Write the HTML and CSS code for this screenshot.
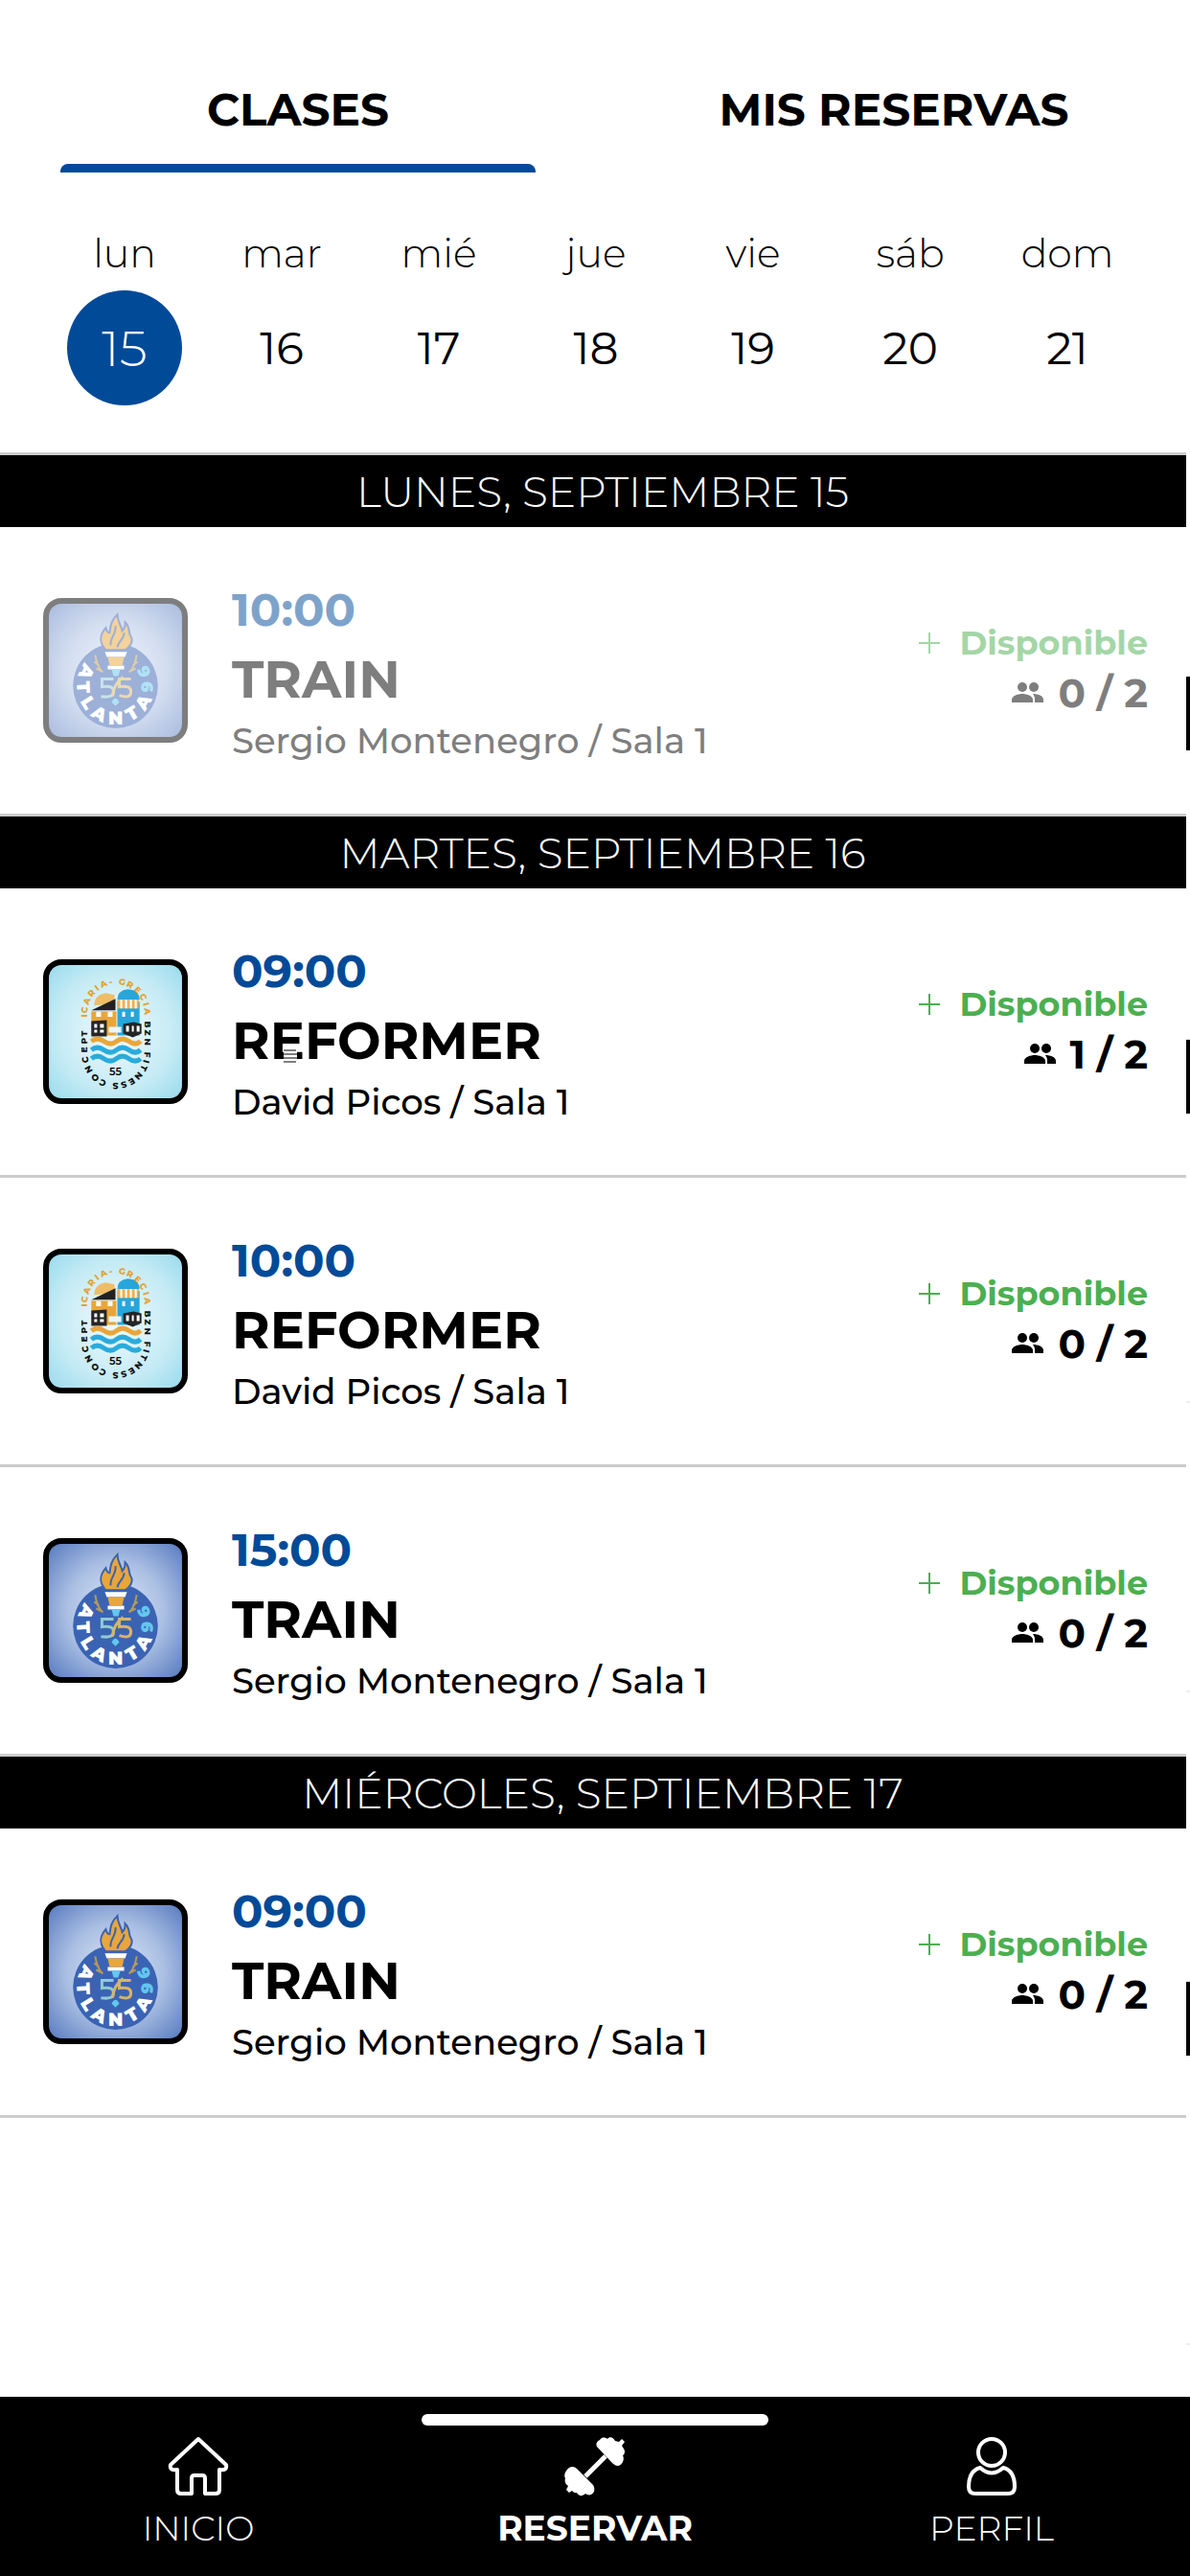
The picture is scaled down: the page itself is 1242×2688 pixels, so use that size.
FILE: index.html
```html
<!DOCTYPE html>
<html lang="es">
<head>
<meta charset="utf-8">
<meta name="viewport" content="width=device-width, initial-scale=1">
<title>Reservar clases</title>
<link rel="stylesheet" href="styles.css">
</head>
<body>
<svg class="defs" aria-hidden="true">
  <defs>
    <radialGradient id="blueGlow" cx="50%" cy="50%" r="70%">
      <stop offset="0" stop-color="#dfe8f7"/><stop offset=".5" stop-color="#aabfe3"/><stop offset="1" stop-color="#5276bd"/>
    </radialGradient>
    <radialGradient id="skyGlow" cx="50%" cy="50%" r="70%">
      <stop offset="0" stop-color="#f2fafc"/><stop offset=".6" stop-color="#c5ebf5"/><stop offset="1" stop-color="#97d9ec"/>
    </radialGradient>
    <path id="atlantaArc" d="M43 67 A40 40 0 1 0 115 91"/>
    <path id="yearArc" d="M95.7 73.6 A27 27 0 0 1 98 105"/>
    <path id="topArc" d="M46 62 V56 A29.5 30 0 0 1 105 56 V66"/>
    <path id="bottomArc" d="M105 63 V97 A29.5 31 0 0 1 46 97 V56"/>
    <symbol id="atlanta" viewBox="0 0 150 150">
      <rect x="3" y="3" width="144" height="144" rx="16" fill="url(#blueGlow)" stroke="#000" stroke-width="6"/>
      <circle cx="75" cy="91" r="44" fill="#3b63b3"/>
      <path d="M65 54c-8-9-6-16 0-23 1 4 2 5 4 5 1-9 2-13 8-19 0 8 4 11 5 17 3-3 3-5 3-9 6 6 3 11 6 15 3 5-1 11-6 14z" fill="#e9a63a" stroke="#3b63b3" stroke-width="2"/>
      <path d="M70 49c-1-8 6-11 5-20M77 51c1-7 7-8 7-15" fill="none" stroke="#3b63b3" stroke-width="2"/>
      <path d="M64 56h23l-2 5H66zM67 70h17v4H67z" fill="#fff"/>
      <path d="M67 61h17l-2 9H69z" fill="#e9a63a"/>
      <path d="M71 74h9l-2 7h-5zM71 108q4-8 8 0l-4 4z" fill="#62c7ee"/>
      <path d="M54 59q2 13 8 18M53 66l5 4M55 73l6 3M97 59q-2 13-8 18M98 66l-5 4M96 73l-6 3" fill="none" stroke="#b89a58" stroke-width="2"/>
      <path d="M73 84H61v8q12-2 12 5 0 7-13 5" fill="none" stroke="#8fcbd0" stroke-width="3"/>
      <path d="M91 84H79v8q12-2 12 5 0 8-12 4M83 82q-10 7-11 20" fill="none" stroke="#d8b468" stroke-width="3"/>
      <text class="seal-name" x="0 21 42 60 81 104 122" fill="#fff"><textPath href="#atlantaArc">ATLANTA</textPath></text>
      <text class="seal-year" x="1 14" fill="#62c7ee"><textPath href="#yearArc">96</textPath></text>
    </symbol>
    <symbol id="icaria" viewBox="0 0 150 150">
      <rect x="3" y="3" width="144" height="144" rx="16" fill="url(#skyGlow)" stroke="#000" stroke-width="6"/>
      <path d="M53 48q0-11 12-13l9 2v9z" fill="#efbd66"/>
      <path d="M50 53l25-12v12z" fill="#222"/>
      <path d="M50 54h26v25H50z" fill="#e9a63a"/>
      <path d="M77 44h23v35H77z" fill="#27a6dc"/>
      <path d="M77 42q0-10 11-11 12 1 12 11z" fill="#27a6dc"/>
      <path d="M77 42h22v9H77z" fill="#edb254"/>
      <path d="M81 42v9M86 42v9M91 42v9M96 42v9" stroke="#fff" stroke-width="2"/>
      <path d="M55 57h5M67 57h5M82 57h3M91 57h3" stroke="#fff" stroke-width="5"/>
      <path d="M50 64l16-1v17H50zM83 67l11-2 8 2v10l-9 4-10-4z" fill="#252525"/>
      <path d="M53 67h3v4h-3zM59 67h4v4h-4zM53 73h3v3h-3zM59 73h4v3h-4zM86 69h3v6h-3zM92 69h2v6h-2zM97 69h3v6h-3z" fill="#fff"/>
      <path d="M68 70h13v6H68z" fill="#e9f6fa"/>
      <g fill="none" stroke-width="5"><path d="M50 85q6-5 13 0t13 0 13 0 12 0" stroke="#e9a63a"/><path d="M50 94q6-5 13 0t13 0 13 0 12 0M50 103q6-5 13 0t13 0 13 0 12 0" stroke="#2aabdc"/></g>
      <text class="ring-name" x="2 6 14 23 32 37 46 55 63 72 80 89 94" fill="#e3a12f"><textPath href="#topArc">ICARIA-GRECIA</textPath></text>
      <text class="ring-name" x="1 10 19 28 33 41 46 54 63 71 79 87 91 99 109 119 129 138 146" fill="#111"><textPath href="#bottomArc">BZN FITNESS CONCEPT</textPath></text>
      <text x="75" y="120" class="ring-mark">55</text>
    </symbol>
    <symbol id="people" viewBox="0 0 34 22">
      <circle cx="11" cy="5" r="5"/><circle cx="23" cy="5" r="5"/>
      <path d="M0 21v-3c0-4 7-6 11-6s11 2 11 6v3zM24 21v-4c0-2-1-3-2-5 5 0 11 2 11 6v3z"/>
    </symbol>
  </defs>
</svg>

<div class="app">
  <header class="top">
    <nav class="tabs" aria-label="Secciones">
      <button class="tab tab-active" type="button">CLASES</button>
      <button class="tab" type="button">MIS RESERVAS</button>
    </nav>
    <div class="week">
      <button class="day day-active" type="button"><span class="day-name">lun</span><span class="day-num">15</span></button>
      <button class="day" type="button"><span class="day-name">mar</span><span class="day-num">16</span></button>
      <button class="day" type="button"><span class="day-name">mié</span><span class="day-num">17</span></button>
      <button class="day" type="button"><span class="day-name">jue</span><span class="day-num">18</span></button>
      <button class="day" type="button"><span class="day-name">vie</span><span class="day-num">19</span></button>
      <button class="day" type="button"><span class="day-name">sáb</span><span class="day-num">20</span></button>
      <button class="day" type="button"><span class="day-name">dom</span><span class="day-num">21</span></button>
    </div>
  </header>

  <main class="pager">
    <div class="schedule">
      <h2 class="date">LUNES, SEPTIEMBRE 15</h2>
      <article class="class-row past">
        <svg class="badge" aria-hidden="true"><use href="#atlanta"/></svg>
        <div class="info"><time class="time">10:00</time><h3 class="name">TRAIN</h3><p class="coach">Sergio Montenegro / Sala 1</p></div>
        <div class="status"><p class="free"><svg class="plus" viewBox="0 0 22 22" aria-hidden="true"><path d="M11 0v22M0 11h22"/></svg>Disponible</p><p class="seats"><svg class="people" aria-hidden="true"><use href="#people"/></svg>0 / 2</p></div>
      </article>
      <h2 class="date">MARTES, SEPTIEMBRE 16</h2>
      <article class="class-row">
        <svg class="badge" aria-hidden="true"><use href="#icaria"/></svg>
        <div class="info"><time class="time">09:00</time><h3 class="name">REFORMER<svg class="glitch" viewBox="0 0 20 16" aria-hidden="true"><path d="M3 0h14v16H3z" fill="#fff"/><path d="M3 2h13M1 6h17v4H1zM3 14h13" fill="none" stroke="#000" stroke-width="1"/></svg></h3><p class="coach">David Picos / Sala 1</p></div>
        <div class="status"><p class="free"><svg class="plus" viewBox="0 0 22 22" aria-hidden="true"><path d="M11 0v22M0 11h22"/></svg>Disponible</p><p class="seats"><svg class="people" aria-hidden="true"><use href="#people"/></svg>1 / 2</p></div>
      </article>
      <article class="class-row">
        <svg class="badge" aria-hidden="true"><use href="#icaria"/></svg>
        <div class="info"><time class="time">10:00</time><h3 class="name">REFORMER</h3><p class="coach">David Picos / Sala 1</p></div>
        <div class="status"><p class="free"><svg class="plus" viewBox="0 0 22 22" aria-hidden="true"><path d="M11 0v22M0 11h22"/></svg>Disponible</p><p class="seats"><svg class="people" aria-hidden="true"><use href="#people"/></svg>0 / 2</p></div>
      </article>
      <article class="class-row">
        <svg class="badge" aria-hidden="true"><use href="#atlanta"/></svg>
        <div class="info"><time class="time">15:00</time><h3 class="name">TRAIN</h3><p class="coach">Sergio Montenegro / Sala 1</p></div>
        <div class="status"><p class="free"><svg class="plus" viewBox="0 0 22 22" aria-hidden="true"><path d="M11 0v22M0 11h22"/></svg>Disponible</p><p class="seats"><svg class="people" aria-hidden="true"><use href="#people"/></svg>0 / 2</p></div>
      </article>
      <h2 class="date">MIÉRCOLES, SEPTIEMBRE 17</h2>
      <article class="class-row">
        <svg class="badge" aria-hidden="true"><use href="#atlanta"/></svg>
        <div class="info"><time class="time">09:00</time><h3 class="name">TRAIN</h3><p class="coach">Sergio Montenegro / Sala 1</p></div>
        <div class="status"><p class="free"><svg class="plus" viewBox="0 0 22 22" aria-hidden="true"><path d="M11 0v22M0 11h22"/></svg>Disponible</p><p class="seats"><svg class="people" aria-hidden="true"><use href="#people"/></svg>0 / 2</p></div>
      </article>
    </div>
    <div class="next-page" aria-hidden="true">
      <div class="peek-date"></div>
      <div class="peek-row"></div>
      <div class="peek-date"></div>
      <div class="peek-row"></div>
      <div class="peek-row"></div>
      <div class="peek-row"></div>
      <div class="peek-date"></div>
      <div class="peek-row"></div>
    </div>
  </main>

  <nav class="bottom-nav" aria-label="Principal">
    <a class="nav-item" href="#inicio">
      <svg class="nav-icon" viewBox="0 0 64 64" aria-hidden="true"><path d="M32 4L3 31c-1 4 1 6 7 5v21q0 4 4 4h11V45q0-3 3-3h8q3 0 3 3v16h11q4 0 4-4V36c6 1 8-1 7-5z"/></svg>
      <span>INICIO</span>
    </a>
    <a class="nav-item nav-active" href="#reservar" aria-current="page">
      <svg class="nav-icon" viewBox="0 0 64 64" aria-hidden="true"><path class="bar" d="M22 43L43 22"/><path class="plate" d="M37 5c3-4 7-2 8-1 2-3 6-2 8 2l4 1 3-3 3 3-3 4c1 2 3 4 3 6s-1 4-2 4c2 4 0 10-5 11-3 0-5-2-7-4L34 12c-1-2-1-5 3-7zM5 34c3-2 6-1 8 1l17 17c2 3 2 8-2 10-2 1-5 0-6-1-3 3-7 3-9-1-2 1-4-1-5-2l-3 2-3-3 2-4c-3-2-4-5-3-8-2-3 0-8 4-11z"/></svg>
      <span>RESERVAR</span>
    </a>
    <a class="nav-item" href="#perfil">
      <svg class="nav-icon" viewBox="0 0 64 64" aria-hidden="true"><rect x="18" y="4" width="28" height="28" rx="14"/><path d="M20 34q12 11 24 0 12 3 12 20 0 7-7 7H15q-7 0-7-7 0-17 12-20z"/></svg>
      <span>PERFIL</span>
    </a>
    <div class="home-bar" aria-hidden="true"></div>
  </nav>
</div>
</body>
</html>
```

FILE: styles.css
```css
* { box-sizing: border-box; }
body {
  margin: 0;
  background: #fff;
  color: #000;
  font-family: Montserrat, Inter, "Open Sans", sans-serif;
}
h2, h3, p { margin: 0; }
button { border: 0; padding: 0; background: none; color: inherit; font: inherit; }
.defs { position: absolute; width: 0; height: 0; }

.app { display: flex; flex-direction: column; min-height: 100vh; }

.top { padding: 56px 61px 49px 63px; }
.tabs { display: grid; grid-template-columns: 1fr 1fr; column-gap: 126px; }
.tab {
  position: relative;
  height: 124px;
  padding-bottom: 6px;
  font-size: 47px;
  font-weight: 700;
  line-height: 56px;
  white-space: nowrap;
}
.tab-active::after {
  content: "";
  position: absolute;
  inset: auto 0 0;
  height: 9px;
  border-radius: 8px 8px 0 0;
  background: #004a98;
}

.week { display: grid; grid-template-columns: repeat(7, 1fr); margin: 60px -15px 0; }
.day { display: flex; flex-direction: column; align-items: center; gap: 15px; }
.day-name { font-size: 41px; font-weight: 300; line-height: 48px; }
.day-num {
  display: flex;
  align-items: center;
  justify-content: center;
  width: 120px;
  height: 120px;
  border-radius: 50%;
  font-size: 47px;
}
.day-active .day-num { background: #004a98; color: #fff; font-size: 52px; font-weight: 300; }

.pager { display: flex; flex: 1; }
.schedule { flex: 1; }
.date {
  height: 78px;
  padding-left: 20px;
  border-top: 3px solid #ccc;
  background: #000;
  color: #fff;
  font-size: 44px;
  font-weight: 300;
  line-height: 76px;
  text-align: center;
}
.class-row {
  display: flex;
  align-items: center;
  gap: 46px;
  height: 302px;
  padding: 0 40px 0 45px;
  border-bottom: 3px solid #ccc;
}
.class-row:has(+ .date) { height: 299px; border-bottom: 0; }
.past > * { opacity: .5; }
.badge { flex: none; width: 151px; height: 151px; }
.seal-name { font-size: 19px; font-weight: 900; }
.seal-year { font-size: 17px; font-weight: 900; }
.ring-name { font-size: 9px; font-weight: 800; }
.ring-mark { font-size: 11px; font-weight: 600; text-anchor: middle; }
.info { flex: 1; }
.time { display: block; color: #004a98; font-size: 48px; font-weight: 700; line-height: 64px; }
.name { position: relative; font-size: 54px; font-weight: 700; line-height: 82px; }
.glitch { position: absolute; left: 51px; top: 49px; width: 20px; height: 16px; }
.coach { font-size: 37px; font-weight: 500; line-height: 46px; }
.status { display: flex; flex-direction: column; align-items: flex-end; padding-bottom: 2px; }
.free { display: flex; align-items: center; gap: 20px; color: #4caf50; font-size: 35px; font-weight: 700; line-height: 48px; }
.plus { width: 22px; height: 22px; fill: none; stroke: #4caf50; stroke-width: 2; }
.seats { display: flex; align-items: center; gap: 14px; font-size: 42px; font-weight: 700; line-height: 56px; }
.people { width: 34px; height: 22px; }

.next-page { width: 4px; padding-top: 234px; }
.peek-date { height: 77px; background: #000; }
.peek-row { height: 302px; border-bottom: 2px solid #eee; }

.bottom-nav {
  position: relative;
  display: grid;
  grid-template-columns: repeat(3, 1fr);
  padding: 40px 0 26px;
  background: #000;
}
.nav-item {
  display: flex;
  flex-direction: column;
  align-items: center;
  gap: 9px;
  color: #fff;
  font-size: 36px;
  font-weight: 300;
  line-height: 48px;
  text-decoration: none;
}
.nav-active { font-weight: 700; }
.nav-icon { width: 64px; height: 64px; fill: none; stroke: #fff; stroke-width: 4; stroke-linejoin: round; }
.nav-icon .plate { fill: #fff; stroke: none; }
.nav-icon .bar { stroke-width: 5; }
.home-bar { position: absolute; top: 18px; left: 440px; right: 440px; height: 12px; border-radius: 6px; background: #fff; }
```
